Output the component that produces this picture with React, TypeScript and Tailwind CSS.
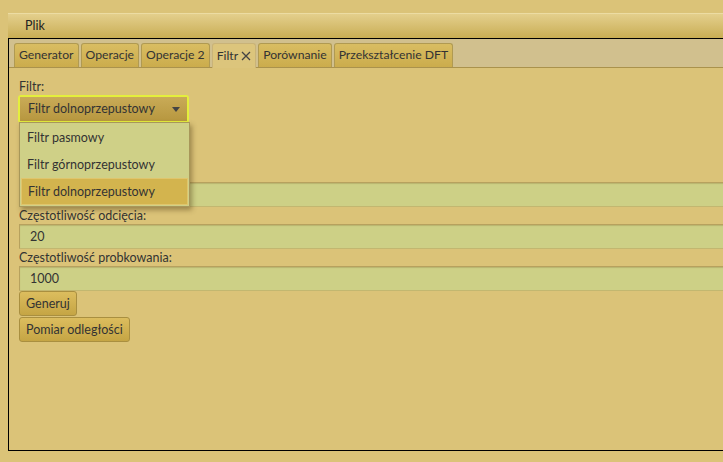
import React from "react";

const tabs = [
  "Generator",
  "Operacje",
  "Operacje 2",
  "Filtr",
  "Porównanie",
  "Przekształcenie DFT",
];

const options = ["Filtr pasmowy", "Filtr górnoprzepustowy", "Filtr dolnoprzepustowy"];

const Field = ({ label, value }: { label: string; value: string }) => (
  <div className="flex flex-col">
    <div className="h-[17px] leading-[17px]">{label}</div>
    <div className="h-[25px] w-[720px] border border-[#b7a15e] border-b-[#c2b770] bg-[#cdd086] pl-[10px] leading-[23px] shadow-[inset_0_1px_1px_rgba(120,100,40,0.25)]">
      {value}
    </div>
  </div>
);

const Button = ({ children }: { children: React.ReactNode }) => (
  <button className="h-[25px] rounded-[3px] border border-[#a98f40] bg-gradient-to-b from-[#dcbd5e] to-[#c5a544] px-[6px] leading-[23px] text-[#333]">
    {children}
  </button>
);

export default function App() {
  return (
    <div
      className="h-[462px] w-[723px] overflow-hidden bg-[#dbc378] pl-[8px] pt-[13px] text-[12.5px] text-[#333]"
      style={{ fontFamily: "Lato, 'Open Sans', sans-serif" }}
    >
      {/* menu bar */}
      <div className="h-[25px] border-t border-[#ecdca3] bg-gradient-to-b from-[#e4cf8c] to-[#c9ae54] pl-[17px] leading-[24px] text-[#222]">
        Plik
      </div>
      {/* main box */}
      <div className="h-[413px] border border-r-0 border-black">
        {/* tab header */}
        <div className="flex h-[29px] items-end gap-[2px] border-b border-[#aa924c] bg-[#d1c08e] pl-[5px] text-[12.2px]">
          {tabs.map((t) =>
            t === "Filtr" ? (
              <div
                key={t}
                className="-mb-px flex h-[25px] items-center gap-[3px] rounded-t-[3px] border border-b-0 border-[#c9b378] bg-[#dcc57c] px-[4px]"
              >
                <span>Filtr</span>
                <svg width="10" height="10" viewBox="0 0 10 10">
                  <path d="M1 1 L9 9 M9 1 L1 9" stroke="#444" strokeWidth="1.3" />
                </svg>
              </div>
            ) : (
              <div
                key={t}
                className="flex h-[24px] items-center rounded-t-[3px] border border-b-0 border-[#b09a52] bg-gradient-to-b from-[#d9bd62] to-[#cbac4c] px-[4px]"
              >
                {t}
              </div>
            )
          )}
        </div>
        {/* content */}
        <div className="relative flex flex-col pl-[10px] pt-[10px]">
          <div className="h-[17px] leading-[17px]">Filtr:</div>
          <div className="h-[28px] w-[171px] rounded-[3px] border-2 border-[#e4ef3c] -ml-px">
            <div className="flex h-full items-center justify-between bg-gradient-to-b from-[#c9ab57] to-[#b7973f] pl-[8px] pr-[7px]">
              <span>Filtr dolnoprzepustowy</span>
              <svg width="8" height="5" viewBox="0 0 8 5">
                <path d="M0 0 H8 L4 5 Z" fill="#444" />
              </svg>
            </div>
          </div>
          <div className="h-[42px]" />
          <Field label="" value="" />
          <Field label="Częstotliwość odcięcia:" value="20" />
          <Field label="Częstotliwość probkowania:" value="1000" />
          <div className="flex flex-col items-start gap-[1px]">
            <Button>Generuj</Button>
            <Button>Pomiar odległości</Button>
          </div>

          {/* dropdown popup */}
          <div className="absolute left-[10px] top-[54px] w-[171px] border border-[#a8975a] bg-[#cfd087] py-[1px] shadow-[2px_3px_5px_rgba(80,60,20,0.45)]">
            {options.map((o) =>
              o === "Filtr dolnoprzepustowy" ? (
                <div
                  key={o}
                  className="mx-px h-[27px] border border-[#e0c56c] bg-[#d3b44e] pl-[6px] leading-[25px]"
                >
                  {o}
                </div>
              ) : (
                <div key={o} className="h-[27px] pl-[7px] leading-[27px]">
                  {o}
                </div>
              )
            )}
          </div>
        </div>
      </div>
    </div>
  );
}
